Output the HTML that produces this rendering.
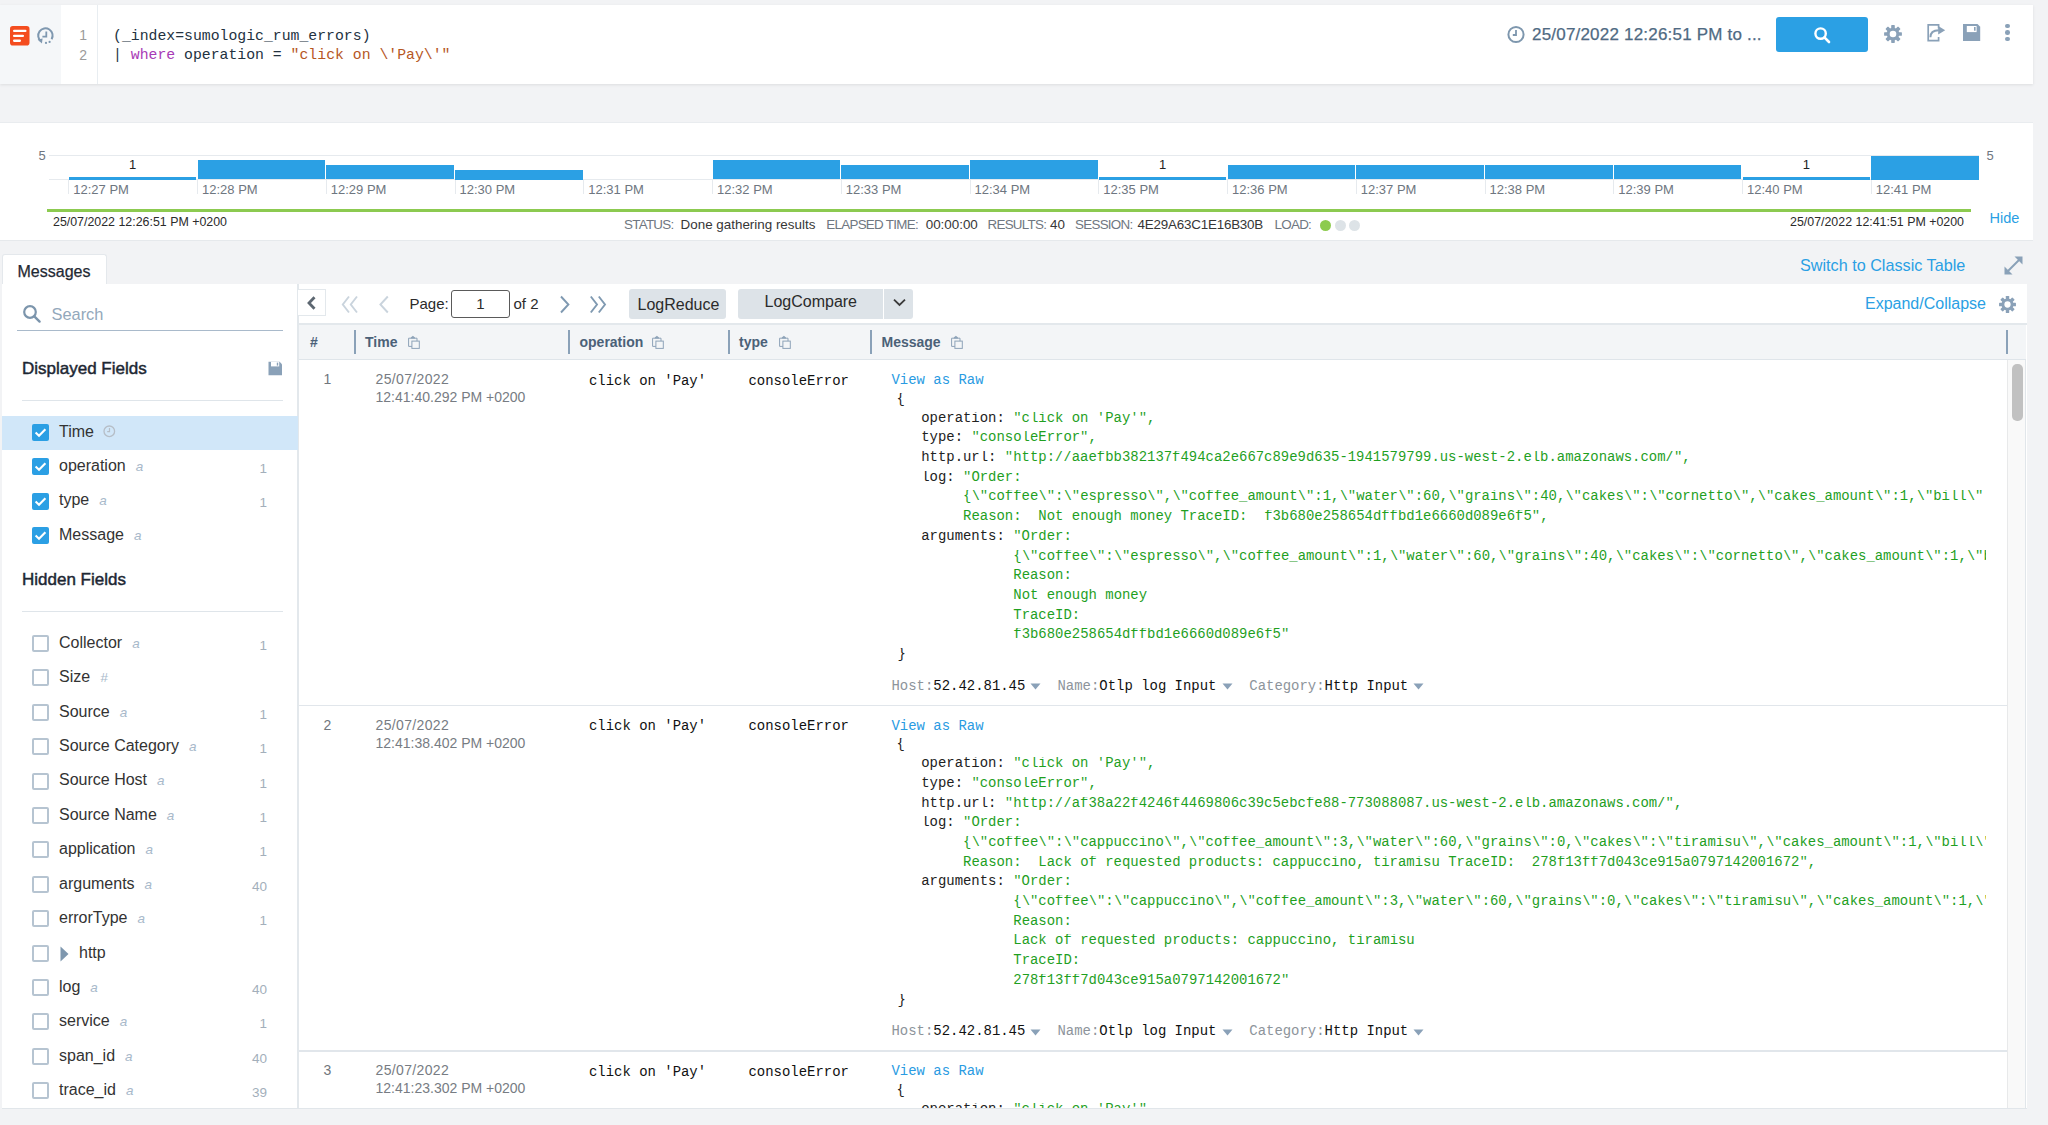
<!DOCTYPE html>
<html><head><meta charset="utf-8">
<style>
*{box-sizing:border-box}
html,body{margin:0;padding:0}
body{width:2048px;height:1125px;background:#f2f3f5;position:relative;overflow:hidden;font-family:"Liberation Sans",sans-serif;color:#333}
.a{position:absolute}
.t{position:absolute;line-height:1;white-space:pre}
.m{font-family:"Liberation Mono",monospace}
.bar{position:absolute;background:#2ba0e4}
.tick{position:absolute;width:1px;background:#e6eaee;top:179px;height:15px}
.cb{position:absolute;left:32px;width:17px;height:17px;border-radius:2px}
.cbon{background:#2b9fe4}
.cboff{border:2px solid #b6c4d1;background:#fff}
.ty{font-style:italic;font-size:13.5px;color:#a8b9ca;margin-left:10px}
</style></head><body>
<div class="a" style="left:0px;top:5px;width:2033px;height:79px;background:#fff;box-shadow:0 1px 3px rgba(0,0,0,.09)"></div>
<div class="a" style="left:0px;top:5px;width:61px;height:79px;background:#f5f7f9"></div>
<div class="a" style="left:61px;top:5px;width:37px;height:79px;background:#fff;border-right:1px solid #e8edf1"></div>
<svg class="a" style="left:10px;top:26px" width="20" height="20" viewBox="0 0 20 20">
  <rect x="0" y="0" width="19.5" height="19.5" rx="2.8" fill="#f44d1f"/>
  <rect x="3" y="3.8" width="13.5" height="2.3" rx="1.1" fill="#fff"/>
  <rect x="3" y="8.7" width="11" height="2.3" rx="1.1" fill="#fff"/>
  <rect x="3" y="13.6" width="8" height="2.3" rx="1.1" fill="#fff"/>
</svg>
<svg class="a" style="left:36px;top:26px" width="20" height="20" viewBox="0 0 20 20">
  <path d="M15.6 13.2 A7.2 7.2 0 1 0 5.0 15.2" fill="none" stroke="#7f98b0" stroke-width="2"/>
  <path d="M1.6 13.6 L6.6 12.4 L5.9 17.4 Z" fill="#7f98b0"/>
  <path d="M10.3 5.4 V10.6 H6.4" fill="none" stroke="#7f98b0" stroke-width="1.8"/>
  <circle cx="10" cy="16.9" r="1.1" fill="#7f98b0"/>
  <circle cx="13.6" cy="15.9" r="1.1" fill="#7f98b0"/>
</svg>
<div class="t" style="left:70px;width:17px;text-align:right;top:28.1px;font-size:14px;color:#9b9b9b">1</div>
<div class="t" style="left:70px;width:17px;text-align:right;top:47.9px;font-size:14px;color:#9b9b9b">2</div>
<div class="t m" style="left:113.00px;top:28.66px;font-size:14.8px;color:#23323f;">(_index=sumologic_rum_errors)</div>
<div class="t m" style="left:113.00px;top:48.46px;font-size:14.8px;color:#23323f;">| <span style="color:#a83bb6">where</span> operation = <span style="color:#b6571f">"click on \'Pay\'"</span></div>
<svg class="a" style="left:1506px;top:25px" width="20" height="20" viewBox="0 0 20 20">
  <circle cx="10" cy="9.5" r="7.6" fill="none" stroke="#7e97ae" stroke-width="2"/>
  <path d="M10 5 V10 H6.8" fill="none" stroke="#7e97ae" stroke-width="1.8"/>
</svg>
<div class="t" style="left:1532.00px;top:25.91px;font-size:17px;color:#4f6a83;letter-spacing:0.2px;-webkit-text-stroke:0.25px #4f6a83">25/07/2022 12:26:51 PM to ...</div>
<div class="a" style="left:1776px;top:17px;width:92px;height:35px;background:#2ba0e4;border-radius:3px"></div>
<svg class="a" style="left:1812px;top:25px" width="20" height="20" viewBox="0 0 20 20">
  <circle cx="8.6" cy="8.6" r="5.2" fill="none" stroke="#fff" stroke-width="2.4"/>
  <path d="M12.4 12.4 L17 17" stroke="#fff" stroke-width="2.6" stroke-linecap="round"/>
</svg>
<svg class="a" style="left:1883px;top:23.5px" width="20" height="20" viewBox="0 0 20 20"><g fill="#8aa1b8">
  <circle cx="10" cy="10" r="6.3"/>
  <rect x="8.2" y="1.1" width="3.6" height="17.8" rx="0.6"/>
  <rect x="8.2" y="1.1" width="3.6" height="17.8" rx="0.6" transform="rotate(45 10 10)"/>
  <rect x="8.2" y="1.1" width="3.6" height="17.8" rx="0.6" transform="rotate(90 10 10)"/>
  <rect x="8.2" y="1.1" width="3.6" height="17.8" rx="0.6" transform="rotate(135 10 10)"/>
  </g>
  <circle cx="10" cy="10" r="3.3" fill="#fff"/></svg>
<svg class="a" style="left:1926px;top:23px" width="22" height="20" viewBox="0 0 22 20">
  <path d="M12.6 5.5 V1.8 H2.2 V17.6 H12.6 V14" fill="none" stroke="#8aa1b8" stroke-width="1.7"/>
  <path d="M4.4 14.2 C4.4 9.8 7.6 7.2 12.8 7.2" fill="none" stroke="#8aa1b8" stroke-width="2"/>
  <path d="M12.2 3 L19.2 7.2 L12.2 11.4 Z" fill="#8aa1b8"/>
</svg>
<svg class="a" style="left:1963px;top:24px" width="18" height="18" viewBox="0 0 18 18">
  <path d="M0 0 H14.5 L17.2 2.7 V17 H0 Z" fill="#8aa1b8"/>
  <rect x="3.8" y="2" width="9.8" height="6.1" fill="#fff"/>
  <rect x="11" y="3" width="1.6" height="3.7" fill="#8aa1b8"/>
</svg>
<div class="a" style="left:2005px;top:23.7px;width:4.6px;height:4.6px;border-radius:50%;background:#8aa1b8"></div>
<div class="a" style="left:2005px;top:30.3px;width:4.6px;height:4.6px;border-radius:50%;background:#8aa1b8"></div>
<div class="a" style="left:2005px;top:36.8px;width:4.6px;height:4.6px;border-radius:50%;background:#8aa1b8"></div>
<div class="a" style="left:0px;top:121.5px;width:2033px;height:119px;background:#fff;border-top:1px solid #e9ecef;border-bottom:1px solid #e6e9ec"></div>
<div class="a" style="left:49px;top:155px;width:1930px;height:1px;background:#e6eaee"></div>
<div class="a" style="left:49px;top:179px;width:1930px;height:1px;background:#e6eaee"></div>
<div class="t" style="left:38.50px;top:149.00px;font-size:13px;color:#6e7680;">5</div>
<div class="t" style="left:1986.50px;top:149.00px;font-size:13px;color:#6e7680;">5</div>
<div class="tick" style="left:68.3px"></div>
<div class="t" style="left:73.30px;top:183.00px;font-size:13px;color:#6e7680;">12:27 PM</div>
<div class="bar" style="left:68.9px;top:177px;width:127.6px;height:2.5px"></div>
<div class="t" style="left:68.3px;width:128.75px;text-align:center;top:157.60px;font-size:13px;color:#222">1</div>
<div class="tick" style="left:197.1px"></div>
<div class="t" style="left:202.05px;top:183.00px;font-size:13px;color:#6e7680;">12:28 PM</div>
<div class="bar" style="left:197.7px;top:160.4px;width:127.5px;height:19.1px"></div>
<div class="tick" style="left:325.8px"></div>
<div class="t" style="left:330.80px;top:183.00px;font-size:13px;color:#6e7680;">12:29 PM</div>
<div class="bar" style="left:326.4px;top:165.2px;width:127.5px;height:14.3px"></div>
<div class="tick" style="left:454.6px"></div>
<div class="t" style="left:459.55px;top:183.00px;font-size:13px;color:#6e7680;">12:30 PM</div>
<div class="bar" style="left:455.2px;top:170px;width:127.5px;height:9.5px"></div>
<div class="tick" style="left:583.3px"></div>
<div class="t" style="left:588.30px;top:183.00px;font-size:13px;color:#6e7680;">12:31 PM</div>
<div class="tick" style="left:712.0px"></div>
<div class="t" style="left:717.05px;top:183.00px;font-size:13px;color:#6e7680;">12:32 PM</div>
<div class="bar" style="left:712.6px;top:160.4px;width:127.5px;height:19.1px"></div>
<div class="tick" style="left:840.8px"></div>
<div class="t" style="left:845.80px;top:183.00px;font-size:13px;color:#6e7680;">12:33 PM</div>
<div class="bar" style="left:841.4px;top:165.2px;width:127.5px;height:14.3px"></div>
<div class="tick" style="left:969.5px"></div>
<div class="t" style="left:974.55px;top:183.00px;font-size:13px;color:#6e7680;">12:34 PM</div>
<div class="bar" style="left:970.1px;top:160.4px;width:127.6px;height:19.1px"></div>
<div class="tick" style="left:1098.3px"></div>
<div class="t" style="left:1103.30px;top:183.00px;font-size:13px;color:#6e7680;">12:35 PM</div>
<div class="bar" style="left:1098.9px;top:177px;width:127.6px;height:2.5px"></div>
<div class="t" style="left:1098.3px;width:128.75px;text-align:center;top:157.60px;font-size:13px;color:#222">1</div>
<div class="tick" style="left:1227.0px"></div>
<div class="t" style="left:1232.05px;top:183.00px;font-size:13px;color:#6e7680;">12:36 PM</div>
<div class="bar" style="left:1227.6px;top:165.2px;width:127.6px;height:14.3px"></div>
<div class="tick" style="left:1355.8px"></div>
<div class="t" style="left:1360.80px;top:183.00px;font-size:13px;color:#6e7680;">12:37 PM</div>
<div class="bar" style="left:1356.4px;top:165.2px;width:127.6px;height:14.3px"></div>
<div class="tick" style="left:1484.5px"></div>
<div class="t" style="left:1489.55px;top:183.00px;font-size:13px;color:#6e7680;">12:38 PM</div>
<div class="bar" style="left:1485.1px;top:165.2px;width:127.6px;height:14.3px"></div>
<div class="tick" style="left:1613.3px"></div>
<div class="t" style="left:1618.30px;top:183.00px;font-size:13px;color:#6e7680;">12:39 PM</div>
<div class="bar" style="left:1613.9px;top:165.2px;width:127.6px;height:14.3px"></div>
<div class="tick" style="left:1742.0px"></div>
<div class="t" style="left:1747.05px;top:183.00px;font-size:13px;color:#6e7680;">12:40 PM</div>
<div class="bar" style="left:1742.6px;top:177px;width:127.6px;height:2.5px"></div>
<div class="t" style="left:1742.0px;width:128.75px;text-align:center;top:157.60px;font-size:13px;color:#222">1</div>
<div class="tick" style="left:1870.8px"></div>
<div class="t" style="left:1875.80px;top:183.00px;font-size:13px;color:#6e7680;">12:41 PM</div>
<div class="bar" style="left:1871.4px;top:155.5px;width:107.6px;height:24.0px"></div>
<div class="a" style="left:47px;top:209px;width:1923.5px;height:3px;background:#8cca50"></div>
<div class="t" style="left:53.00px;top:215.70px;font-size:12.4px;color:#2b2b2b;">25/07/2022 12:26:51 PM +0200</div>
<div class="t" style="left:1764px;width:200px;text-align:right;top:216.00px;font-size:12.4px;color:#2b2b2b">25/07/2022 12:41:51 PM +0200</div>
<div class="t" style="left:1989.50px;top:210.73px;font-size:14.5px;color:#2a9fe4;">Hide</div>
<div class="t" style="left:624.00px;top:217.76px;font-size:13.4px;color:#6f7781;letter-spacing:-0.72px">STATUS:</div>
<div class="t" style="left:680.60px;top:217.76px;font-size:13.4px;color:#363636;">Done gathering results</div>
<div class="t" style="left:826.30px;top:217.76px;font-size:13.4px;color:#6f7781;letter-spacing:-0.72px">ELAPSED TIME:</div>
<div class="t" style="left:925.70px;top:217.76px;font-size:13.4px;color:#363636;">00:00:00</div>
<div class="t" style="left:987.50px;top:217.76px;font-size:13.4px;color:#6f7781;letter-spacing:-0.72px">RESULTS:</div>
<div class="t" style="left:1050.00px;top:217.76px;font-size:13.4px;color:#363636;">40</div>
<div class="t" style="left:1075.00px;top:217.76px;font-size:13.4px;color:#6f7781;letter-spacing:-0.72px">SESSION:</div>
<div class="t" style="left:1137.50px;top:217.76px;font-size:13.4px;color:#363636;letter-spacing:-0.2px">4E29A63C1E16B30B</div>
<div class="t" style="left:1274.50px;top:217.76px;font-size:13.4px;color:#6f7781;letter-spacing:-0.72px">LOAD:</div>
<div class="a" style="left:1320px;top:220px;width:11px;height:11px;border-radius:50%;background:#8dcb4f"></div>
<div class="a" style="left:1334.5px;top:220px;width:11px;height:11px;border-radius:50%;background:#dde3e7"></div>
<div class="a" style="left:1348.7px;top:220px;width:11px;height:11px;border-radius:50%;background:#dde3e7"></div>
<div class="a" style="left:2px;top:254px;width:105px;height:30px;background:#fff;border:1px solid #e4e8ec;border-bottom:none;border-radius:3px 3px 0 0"></div>
<div class="t" style="left:17.50px;top:263.76px;font-size:16px;color:#1f2933;-webkit-text-stroke:0.25px #1f2933">Messages</div>
<div class="t" style="left:1800.00px;top:257.29px;font-size:16.2px;color:#2a9fe4;">Switch to Classic Table</div>
<svg class="a" style="left:2003px;top:255px" width="21" height="21" viewBox="0 0 21 21">
  <path d="M4.5 16.5 L16.5 4.5" stroke="#8aa1b8" stroke-width="2"/>
  <path d="M11.5 1.5 H19.5 V9.5 Z" fill="#8aa1b8"/>
  <path d="M1.5 11.5 V19.5 H9.5 Z" fill="#8aa1b8"/>
</svg>
<div class="a" style="left:2px;top:283.5px;width:296px;height:825.5px;background:#fff;border-right:1px solid #e3e8ec"></div>
<svg class="a" style="left:22px;top:304px" width="20" height="20" viewBox="0 0 20 20">
  <circle cx="8" cy="8" r="5.8" fill="none" stroke="#7c95ac" stroke-width="2.2"/>
  <path d="M12.3 12.3 L17.6 17.6" stroke="#7c95ac" stroke-width="2.4" stroke-linecap="round"/>
</svg>
<div class="t" style="left:51.50px;top:305.72px;font-size:16.4px;color:#93a8bb;">Search</div>
<div class="a" style="left:17px;top:329.8px;width:266px;height:1.6px;background:#a9bacb"></div>
<div class="t" style="left:22.00px;top:360.11px;font-size:17px;color:#1d2733;-webkit-text-stroke:0.45px #1d2733">Displayed Fields</div>
<svg class="a" style="left:268px;top:361px" width="15" height="15" viewBox="0 0 15 15">
  <path d="M0.5 0.8 H11.6 L14 3.2 V14.2 H0.5 Z" fill="#8aa1b8"/>
  <rect x="3" y="0.8" width="8.2" height="4.6" fill="#fff"/>
  <rect x="8.8" y="1.6" width="1.4" height="3" fill="#8aa1b8"/>
</svg>
<div class="a" style="left:22px;top:400px;width:261px;height:1px;background:#dfe5ea"></div>
<div class="a" style="left:2px;top:416px;width:296px;height:34px;background:#d1e7f9"></div>
<div class="cb cbon" style="top:424.0px"><svg width="17" height="17" viewBox="0 0 17 17" style="position:absolute;left:0;top:0"><path d="M3.6 8.6 L7 11.8 L13.4 5.2" fill="none" stroke="#fff" stroke-width="2.1"/></svg></div>
<div class="t" style="left:59.00px;top:423.66px;font-size:16px;color:#333;">Time</div>
<div class="cb cbon" style="top:458.3px"><svg width="17" height="17" viewBox="0 0 17 17" style="position:absolute;left:0;top:0"><path d="M3.6 8.6 L7 11.8 L13.4 5.2" fill="none" stroke="#fff" stroke-width="2.1"/></svg></div>
<div class="t" style="left:59.00px;top:457.96px;font-size:16px;color:#333;">operation<span class="ty">a</span></div>
<div class="t" style="left:200px;width:67px;text-align:right;top:462.07px;font-size:13.5px;color:#a3afbb">1</div>
<div class="cb cbon" style="top:492.6px"><svg width="17" height="17" viewBox="0 0 17 17" style="position:absolute;left:0;top:0"><path d="M3.6 8.6 L7 11.8 L13.4 5.2" fill="none" stroke="#fff" stroke-width="2.1"/></svg></div>
<div class="t" style="left:59.00px;top:492.26px;font-size:16px;color:#333;">type<span class="ty">a</span></div>
<div class="t" style="left:200px;width:67px;text-align:right;top:496.37px;font-size:13.5px;color:#a3afbb">1</div>
<div class="cb cbon" style="top:526.9px"><svg width="17" height="17" viewBox="0 0 17 17" style="position:absolute;left:0;top:0"><path d="M3.6 8.6 L7 11.8 L13.4 5.2" fill="none" stroke="#fff" stroke-width="2.1"/></svg></div>
<div class="t" style="left:59.00px;top:526.56px;font-size:16px;color:#333;">Message<span class="ty">a</span></div>
<svg class="a" style="left:102.5px;top:424.5px" width="13" height="13" viewBox="0 0 13 13">
  <circle cx="6.3" cy="6.3" r="5.3" fill="none" stroke="#b6bec7" stroke-width="1.3"/>
  <path d="M6.5 3 V6.7 H4.2" fill="none" stroke="#b6bec7" stroke-width="1.2"/>
</svg>
<div class="t" style="left:22.00px;top:570.61px;font-size:17px;color:#1d2733;-webkit-text-stroke:0.45px #1d2733">Hidden Fields</div>
<div class="a" style="left:22px;top:610.5px;width:261px;height:1px;background:#dfe5ea"></div>
<div class="cb cboff" style="top:634.8px"></div>
<div class="t" style="left:59.00px;top:634.76px;font-size:16px;color:#333;">Collector<span class="ty">a</span></div>
<div class="t" style="left:200px;width:67px;text-align:right;top:638.87px;font-size:13.5px;color:#a3afbb">1</div>
<div class="cb cboff" style="top:669.2px"></div>
<div class="t" style="left:59.00px;top:669.18px;font-size:16px;color:#333;">Size<span class="ty">#</span></div>
<div class="cb cboff" style="top:703.6px"></div>
<div class="t" style="left:59.00px;top:703.60px;font-size:16px;color:#333;">Source<span class="ty">a</span></div>
<div class="t" style="left:200px;width:67px;text-align:right;top:707.71px;font-size:13.5px;color:#a3afbb">1</div>
<div class="cb cboff" style="top:738.1px"></div>
<div class="t" style="left:59.00px;top:738.02px;font-size:16px;color:#333;">Source Category<span class="ty">a</span></div>
<div class="t" style="left:200px;width:67px;text-align:right;top:742.13px;font-size:13.5px;color:#a3afbb">1</div>
<div class="cb cboff" style="top:772.5px"></div>
<div class="t" style="left:59.00px;top:772.44px;font-size:16px;color:#333;">Source Host<span class="ty">a</span></div>
<div class="t" style="left:200px;width:67px;text-align:right;top:776.55px;font-size:13.5px;color:#a3afbb">1</div>
<div class="cb cboff" style="top:806.9px"></div>
<div class="t" style="left:59.00px;top:806.86px;font-size:16px;color:#333;">Source Name<span class="ty">a</span></div>
<div class="t" style="left:200px;width:67px;text-align:right;top:810.97px;font-size:13.5px;color:#a3afbb">1</div>
<div class="cb cboff" style="top:841.3px"></div>
<div class="t" style="left:59.00px;top:841.28px;font-size:16px;color:#333;">application<span class="ty">a</span></div>
<div class="t" style="left:200px;width:67px;text-align:right;top:845.39px;font-size:13.5px;color:#a3afbb">1</div>
<div class="cb cboff" style="top:875.7px"></div>
<div class="t" style="left:59.00px;top:875.70px;font-size:16px;color:#333;">arguments<span class="ty">a</span></div>
<div class="t" style="left:200px;width:67px;text-align:right;top:879.81px;font-size:13.5px;color:#a3afbb">40</div>
<div class="cb cboff" style="top:910.2px"></div>
<div class="t" style="left:59.00px;top:910.12px;font-size:16px;color:#333;">errorType<span class="ty">a</span></div>
<div class="t" style="left:200px;width:67px;text-align:right;top:914.23px;font-size:13.5px;color:#a3afbb">1</div>
<div class="cb cboff" style="top:944.6px"></div>
<svg class="a" style="left:60px;top:946.1px" width="10" height="16" viewBox="0 0 10 16"><path d="M0.5 0.5 L8.5 8 L0.5 15.5 Z" fill="#7e97ae"/></svg>
<div class="t" style="left:79.00px;top:944.54px;font-size:16px;color:#333;">http</div>
<div class="cb cboff" style="top:979.0px"></div>
<div class="t" style="left:59.00px;top:978.96px;font-size:16px;color:#333;">log<span class="ty">a</span></div>
<div class="t" style="left:200px;width:67px;text-align:right;top:983.07px;font-size:13.5px;color:#a3afbb">40</div>
<div class="cb cboff" style="top:1013.4px"></div>
<div class="t" style="left:59.00px;top:1013.38px;font-size:16px;color:#333;">service<span class="ty">a</span></div>
<div class="t" style="left:200px;width:67px;text-align:right;top:1017.49px;font-size:13.5px;color:#a3afbb">1</div>
<div class="cb cboff" style="top:1047.8px"></div>
<div class="t" style="left:59.00px;top:1047.80px;font-size:16px;color:#333;">span_id<span class="ty">a</span></div>
<div class="t" style="left:200px;width:67px;text-align:right;top:1051.91px;font-size:13.5px;color:#a3afbb">40</div>
<div class="cb cboff" style="top:1082.3px"></div>
<div class="t" style="left:59.00px;top:1082.22px;font-size:16px;color:#333;">trace_id<span class="ty">a</span></div>
<div class="t" style="left:200px;width:67px;text-align:right;top:1086.33px;font-size:13.5px;color:#a3afbb">39</div>
<div class="a" style="left:298px;top:283.5px;width:1729px;height:825.5px;background:#fff;border-left:1px solid #e3e8ec"></div>
<div class="a" style="left:298px;top:289px;width:28px;height:27px;border:1px solid #e3e8ec;border-left:none;background:#fff"></div>
<svg class="a" style="left:304px;top:294px" width="16" height="18" viewBox="0 0 16 18">
  <path d="M10.5 3.2 L5 9 L10.5 14.8" fill="none" stroke="#5d6771" stroke-width="2.8"/>
</svg>
<svg class="a" style="left:340px;top:294px" width="22" height="22" viewBox="0 0 22 22">
  <path d="M9 2.5 L2.8 10.5 L9 18.5 M17 2.5 L10.8 10.5 L17 18.5" fill="none" stroke="#cad4dd" stroke-width="1.9"/>
</svg>
<svg class="a" style="left:376px;top:294px" width="16" height="22" viewBox="0 0 16 22">
  <path d="M11.8 2.5 L4.4 10.5 L11.8 18.5" fill="none" stroke="#cad4dd" stroke-width="1.9"/>
</svg>
<div class="t" style="left:409.50px;top:296.30px;font-size:15px;color:#2b2b2b;">Page:</div>
<div class="a" style="left:451px;top:290px;width:59px;height:28px;border:1px solid #5a5a5a;border-radius:3px;background:#fff"></div>
<div class="t" style="left:451px;width:59px;text-align:center;top:296.30px;font-size:15px;color:#2b2b2b">1</div>
<div class="t" style="left:513.50px;top:296.30px;font-size:15px;color:#2b2b2b;">of 2</div>
<svg class="a" style="left:557px;top:294px" width="16" height="22" viewBox="0 0 16 22">
  <path d="M4 2.5 L11.4 10.5 L4 18.5" fill="none" stroke="#7f99b1" stroke-width="1.9"/>
</svg>
<svg class="a" style="left:588px;top:294px" width="22" height="22" viewBox="0 0 22 22">
  <path d="M2.8 2.5 L9 10.5 L2.8 18.5 M10.8 2.5 L17 10.5 L10.8 18.5" fill="none" stroke="#7f99b1" stroke-width="1.9"/>
</svg>
<div class="a" style="left:629px;top:289px;width:97px;height:29.5px;background:#dde3e8;border-radius:3px"></div>
<div class="t" style="left:637.50px;top:296.86px;font-size:16px;color:#2b2b2b;">LogReduce</div>
<div class="a" style="left:738px;top:289px;width:175px;height:29.5px;background:#dde3e8;border-radius:3px"></div>
<div class="a" style="left:882.5px;top:289px;width:1.5px;height:29.5px;background:#fff"></div>
<div class="t" style="left:764.50px;top:294.46px;font-size:16px;color:#2b2b2b;">LogCompare</div>
<svg class="a" style="left:892px;top:297px" width="15" height="11" viewBox="0 0 15 11">
  <path d="M2 2.6 L7.5 8 L13 2.6" fill="none" stroke="#3a3a3a" stroke-width="1.8"/>
</svg>
<div class="t" style="left:1865.00px;top:295.76px;font-size:16px;color:#2a9fe4;">Expand/Collapse</div>
<svg class="a" style="left:1998px;top:295px" width="19" height="19" viewBox="0 0 20 20"><g fill="#8aa1b8">
  <circle cx="10" cy="10" r="6.3"/>
  <rect x="8.2" y="1.1" width="3.6" height="17.8" rx="0.6"/>
  <rect x="8.2" y="1.1" width="3.6" height="17.8" rx="0.6" transform="rotate(45 10 10)"/>
  <rect x="8.2" y="1.1" width="3.6" height="17.8" rx="0.6" transform="rotate(90 10 10)"/>
  <rect x="8.2" y="1.1" width="3.6" height="17.8" rx="0.6" transform="rotate(135 10 10)"/>
  </g>
  <circle cx="10" cy="10" r="3.3" fill="#fff"/></svg>
<div class="a" style="left:299px;top:323px;width:1728px;height:1.5px;background:#e3e8ec"></div>
<div class="a" style="left:299px;top:324.5px;width:1727px;height:35.5px;background:#f3f5f7;border-bottom:1.5px solid #dfe5ea"></div>
<div class="t" style="left:310.00px;top:335.05px;font-size:14px;color:#4b6178;font-weight:bold">#</div>
<div class="t" style="left:365.00px;top:335.05px;font-size:14px;color:#4b6178;font-weight:bold">Time</div>
<svg class="a" style="left:407.5px;top:334.5px" width="12" height="14" viewBox="0 0 12 14"><path d="M0.6 3.2 H9 V11.4 H0.6 Z" fill="none" stroke="#8ea3b8" stroke-width="1"/><path d="M2.8 3.6 V2.5 L4.9 0.8 L7 2.5 V3.6 Z" fill="#8ea3b8"/><rect x="3.9" y="6.1" width="7.4" height="7.3" fill="#f3f5f7" stroke="#8ea3b8" stroke-width="1"/></svg>
<div class="t" style="left:579.50px;top:335.05px;font-size:14px;color:#4b6178;font-weight:bold">operation</div>
<svg class="a" style="left:651.5px;top:334.5px" width="12" height="14" viewBox="0 0 12 14"><path d="M0.6 3.2 H9 V11.4 H0.6 Z" fill="none" stroke="#8ea3b8" stroke-width="1"/><path d="M2.8 3.6 V2.5 L4.9 0.8 L7 2.5 V3.6 Z" fill="#8ea3b8"/><rect x="3.9" y="6.1" width="7.4" height="7.3" fill="#f3f5f7" stroke="#8ea3b8" stroke-width="1"/></svg>
<div class="t" style="left:739.00px;top:335.05px;font-size:14px;color:#4b6178;font-weight:bold">type</div>
<svg class="a" style="left:778.5px;top:334.5px" width="12" height="14" viewBox="0 0 12 14"><path d="M0.6 3.2 H9 V11.4 H0.6 Z" fill="none" stroke="#8ea3b8" stroke-width="1"/><path d="M2.8 3.6 V2.5 L4.9 0.8 L7 2.5 V3.6 Z" fill="#8ea3b8"/><rect x="3.9" y="6.1" width="7.4" height="7.3" fill="#f3f5f7" stroke="#8ea3b8" stroke-width="1"/></svg>
<div class="t" style="left:881.50px;top:335.05px;font-size:14px;color:#4b6178;font-weight:bold">Message</div>
<svg class="a" style="left:950.5px;top:334.5px" width="12" height="14" viewBox="0 0 12 14"><path d="M0.6 3.2 H9 V11.4 H0.6 Z" fill="none" stroke="#8ea3b8" stroke-width="1"/><path d="M2.8 3.6 V2.5 L4.9 0.8 L7 2.5 V3.6 Z" fill="#8ea3b8"/><rect x="3.9" y="6.1" width="7.4" height="7.3" fill="#f3f5f7" stroke="#8ea3b8" stroke-width="1"/></svg>
<div class="a" style="left:354px;top:330px;width:2px;height:24px;background:#8aa1b8"></div>
<div class="a" style="left:568px;top:330px;width:2px;height:24px;background:#8aa1b8"></div>
<div class="a" style="left:727.5px;top:330px;width:2px;height:24px;background:#8aa1b8"></div>
<div class="a" style="left:870px;top:330px;width:2px;height:24px;background:#8aa1b8"></div>
<div class="a" style="left:2005.5px;top:330px;width:2px;height:24px;background:#8aa1b8"></div>
<div class="a" style="left:2007.3px;top:360px;width:19.2px;height:749px;background:#f9f9f9;border-left:1.5px solid #e8e9ea;border-right:1px solid #e1e6ea"></div>
<div class="a" style="left:2012px;top:364px;width:10.5px;height:57px;border-radius:5px;background:#c1c1c1"></div>
<div class="t" style="left:323.50px;top:372.05px;font-size:14px;color:#71767d;">1</div>
<div class="t" style="left:375.50px;top:372.05px;font-size:14px;color:#777c83;letter-spacing:0.35px">25/07/2022</div>
<div class="t" style="left:375.50px;top:390.05px;font-size:14px;color:#777c83;">12:41:40.292 PM +0200</div>
<div class="t m" style="left:589.00px;top:374.91px;font-size:13.95px;color:#111;">click on 'Pay'</div>
<div class="t m" style="left:748.50px;top:374.91px;font-size:13.95px;color:#111;">consoleError</div>
<div class="t m" style="left:891.50px;top:374.21px;font-size:13.95px;color:#2a9be2;">View as Raw</div>
<div class="a" style="left:299px;top:704.8px;width:1708px;height:1.5px;background:#e1e6eb"></div>
<div class="t m" style="left:896.50px;top:392.61px;font-size:13.95px;color:#222;width:1089.50px;overflow:hidden">{</div>
<div class="t m" style="left:921.20px;top:411.61px;font-size:13.95px;color:#222;width:1064.80px;overflow:hidden">operation: <span style="color:#1fa01f">"click on 'Pay'",</span></div>
<div class="t m" style="left:921.20px;top:431.31px;font-size:13.95px;color:#222;width:1064.80px;overflow:hidden">type: <span style="color:#1fa01f">"consoleError",</span></div>
<div class="t m" style="left:921.20px;top:451.01px;font-size:13.95px;color:#222;width:1064.80px;overflow:hidden">http.url: <span style="color:#1fa01f">"http://aaefbb382137f494ca2e667c89e9d635-1941579799.us-west-2.elb.amazonaws.com/",</span></div>
<div class="t m" style="left:921.20px;top:470.71px;font-size:13.95px;color:#222;width:1064.80px;overflow:hidden">log: <span style="color:#1fa01f">"Order:</span></div>
<div class="t m" style="left:963.06px;top:490.41px;font-size:13.95px;color:#222;width:1022.94px;overflow:hidden"><span style="color:#1fa01f">{\"coffee\":\"espresso\",\"coffee_amount\":1,\"water\":60,\"grains\":40,\"cakes\":\"cornetto\",\"cakes_amount\":1,\"bill\":0,\"</span></div>
<div class="t m" style="left:963.06px;top:510.11px;font-size:13.95px;color:#222;width:1022.94px;overflow:hidden"><span style="color:#1fa01f">Reason:  Not enough money TraceID:  f3b680e258654dffbd1e6660d089e6f5",</span></div>
<div class="t m" style="left:921.20px;top:529.81px;font-size:13.95px;color:#222;width:1064.80px;overflow:hidden">arguments: <span style="color:#1fa01f">"Order:</span></div>
<div class="t m" style="left:1013.28px;top:549.51px;font-size:13.95px;color:#222;width:972.72px;overflow:hidden"><span style="color:#1fa01f">{\"coffee\":\"espresso\",\"coffee_amount\":1,\"water\":60,\"grains\":40,\"cakes\":\"cornetto\",\"cakes_amount\":1,\"bill\":0,\"</span></div>
<div class="t m" style="left:1013.28px;top:569.21px;font-size:13.95px;color:#222;width:972.72px;overflow:hidden"><span style="color:#1fa01f">Reason:</span></div>
<div class="t m" style="left:1013.28px;top:588.91px;font-size:13.95px;color:#222;width:972.72px;overflow:hidden"><span style="color:#1fa01f">Not enough money</span></div>
<div class="t m" style="left:1013.28px;top:608.61px;font-size:13.95px;color:#222;width:972.72px;overflow:hidden"><span style="color:#1fa01f">TraceID:</span></div>
<div class="t m" style="left:1013.28px;top:628.31px;font-size:13.95px;color:#222;width:972.72px;overflow:hidden"><span style="color:#1fa01f">f3b680e258654dffbd1e6660d089e6f5"</span></div>
<div class="t m" style="left:897.50px;top:648.01px;font-size:13.95px;color:#222;width:1088.50px;overflow:hidden">}</div>
<div class="t m" style="left:891.50px;top:679.61px;font-size:13.95px;color:#8d949b;">Host:<span style="color:#111">52.42.81.45</span></div>
<svg class="a" style="left:1030px;top:683.0px" width="11" height="7" viewBox="0 0 11 7"><path d="M0.5 0.5 H10.5 L5.5 6.5 Z" fill="#8aa1b8"/></svg>
<div class="t m" style="left:1057.50px;top:679.61px;font-size:13.95px;color:#8d949b;">Name:<span style="color:#111">Otlp log Input</span></div>
<svg class="a" style="left:1221.5px;top:683.0px" width="11" height="7" viewBox="0 0 11 7"><path d="M0.5 0.5 H10.5 L5.5 6.5 Z" fill="#8aa1b8"/></svg>
<div class="t m" style="left:1249.30px;top:679.61px;font-size:13.95px;color:#8d949b;">Category:<span style="color:#111">Http Input</span></div>
<svg class="a" style="left:1413px;top:683.0px" width="11" height="7" viewBox="0 0 11 7"><path d="M0.5 0.5 H10.5 L5.5 6.5 Z" fill="#8aa1b8"/></svg>
<div class="t" style="left:323.50px;top:717.55px;font-size:14px;color:#71767d;">2</div>
<div class="t" style="left:375.50px;top:717.55px;font-size:14px;color:#777c83;letter-spacing:0.35px">25/07/2022</div>
<div class="t" style="left:375.50px;top:735.55px;font-size:14px;color:#777c83;">12:41:38.402 PM +0200</div>
<div class="t m" style="left:589.00px;top:720.41px;font-size:13.95px;color:#111;">click on 'Pay'</div>
<div class="t m" style="left:748.50px;top:720.41px;font-size:13.95px;color:#111;">consoleError</div>
<div class="t m" style="left:891.50px;top:719.71px;font-size:13.95px;color:#2a9be2;">View as Raw</div>
<div class="a" style="left:299px;top:1050.3px;width:1708px;height:1.5px;background:#e1e6eb"></div>
<div class="t m" style="left:896.50px;top:738.11px;font-size:13.95px;color:#222;width:1089.50px;overflow:hidden">{</div>
<div class="t m" style="left:921.20px;top:757.11px;font-size:13.95px;color:#222;width:1064.80px;overflow:hidden">operation: <span style="color:#1fa01f">"click on 'Pay'",</span></div>
<div class="t m" style="left:921.20px;top:776.81px;font-size:13.95px;color:#222;width:1064.80px;overflow:hidden">type: <span style="color:#1fa01f">"consoleError",</span></div>
<div class="t m" style="left:921.20px;top:796.51px;font-size:13.95px;color:#222;width:1064.80px;overflow:hidden">http.url: <span style="color:#1fa01f">"http://af38a22f4246f4469806c39c5ebcfe88-773088087.us-west-2.elb.amazonaws.com/",</span></div>
<div class="t m" style="left:921.20px;top:816.21px;font-size:13.95px;color:#222;width:1064.80px;overflow:hidden">log: <span style="color:#1fa01f">"Order:</span></div>
<div class="t m" style="left:963.06px;top:835.91px;font-size:13.95px;color:#222;width:1022.94px;overflow:hidden"><span style="color:#1fa01f">{\"coffee\":\"cappuccino\",\"coffee_amount\":3,\"water\":60,\"grains\":0,\"cakes\":\"tiramisu\",\"cakes_amount\":1,\"bill\":0,\"</span></div>
<div class="t m" style="left:963.06px;top:855.61px;font-size:13.95px;color:#222;width:1022.94px;overflow:hidden"><span style="color:#1fa01f">Reason:  Lack of requested products: cappuccino, tiramisu TraceID:  278f13ff7d043ce915a0797142001672",</span></div>
<div class="t m" style="left:921.20px;top:875.31px;font-size:13.95px;color:#222;width:1064.80px;overflow:hidden">arguments: <span style="color:#1fa01f">"Order:</span></div>
<div class="t m" style="left:1013.28px;top:895.01px;font-size:13.95px;color:#222;width:972.72px;overflow:hidden"><span style="color:#1fa01f">{\"coffee\":\"cappuccino\",\"coffee_amount\":3,\"water\":60,\"grains\":0,\"cakes\":\"tiramisu\",\"cakes_amount\":1,\"bill\":0,\"</span></div>
<div class="t m" style="left:1013.28px;top:914.71px;font-size:13.95px;color:#222;width:972.72px;overflow:hidden"><span style="color:#1fa01f">Reason:</span></div>
<div class="t m" style="left:1013.28px;top:934.41px;font-size:13.95px;color:#222;width:972.72px;overflow:hidden"><span style="color:#1fa01f">Lack of requested products: cappuccino, tiramisu</span></div>
<div class="t m" style="left:1013.28px;top:954.11px;font-size:13.95px;color:#222;width:972.72px;overflow:hidden"><span style="color:#1fa01f">TraceID:</span></div>
<div class="t m" style="left:1013.28px;top:973.81px;font-size:13.95px;color:#222;width:972.72px;overflow:hidden"><span style="color:#1fa01f">278f13ff7d043ce915a0797142001672"</span></div>
<div class="t m" style="left:897.50px;top:993.51px;font-size:13.95px;color:#222;width:1088.50px;overflow:hidden">}</div>
<div class="t m" style="left:891.50px;top:1025.11px;font-size:13.95px;color:#8d949b;">Host:<span style="color:#111">52.42.81.45</span></div>
<svg class="a" style="left:1030px;top:1028.5px" width="11" height="7" viewBox="0 0 11 7"><path d="M0.5 0.5 H10.5 L5.5 6.5 Z" fill="#8aa1b8"/></svg>
<div class="t m" style="left:1057.50px;top:1025.11px;font-size:13.95px;color:#8d949b;">Name:<span style="color:#111">Otlp log Input</span></div>
<svg class="a" style="left:1221.5px;top:1028.5px" width="11" height="7" viewBox="0 0 11 7"><path d="M0.5 0.5 H10.5 L5.5 6.5 Z" fill="#8aa1b8"/></svg>
<div class="t m" style="left:1249.30px;top:1025.11px;font-size:13.95px;color:#8d949b;">Category:<span style="color:#111">Http Input</span></div>
<svg class="a" style="left:1413px;top:1028.5px" width="11" height="7" viewBox="0 0 11 7"><path d="M0.5 0.5 H10.5 L5.5 6.5 Z" fill="#8aa1b8"/></svg>
<div class="t" style="left:323.50px;top:1063.05px;font-size:14px;color:#71767d;">3</div>
<div class="t" style="left:375.50px;top:1063.05px;font-size:14px;color:#777c83;letter-spacing:0.35px">25/07/2022</div>
<div class="t" style="left:375.50px;top:1081.05px;font-size:14px;color:#777c83;">12:41:23.302 PM +0200</div>
<div class="t m" style="left:589.00px;top:1065.91px;font-size:13.95px;color:#111;">click on 'Pay'</div>
<div class="t m" style="left:748.50px;top:1065.91px;font-size:13.95px;color:#111;">consoleError</div>
<div class="t m" style="left:891.50px;top:1065.21px;font-size:13.95px;color:#2a9be2;">View as Raw</div>
<div class="t m" style="left:896.50px;top:1083.61px;font-size:13.95px;color:#222;width:1089.50px;overflow:hidden">{</div>
<div class="t m" style="left:921.20px;top:1102.61px;font-size:13.95px;color:#222;width:1064.80px;overflow:hidden">operation: <span style="color:#1fa01f">"click on 'Pay'",</span></div>
<div class="a" style="left:0px;top:1109px;width:2048px;height:16px;background:#f2f3f5"></div>
<div class="a" style="left:2px;top:1108px;width:2025px;height:1.2px;background:#e1e6ea"></div>
</body></html>
